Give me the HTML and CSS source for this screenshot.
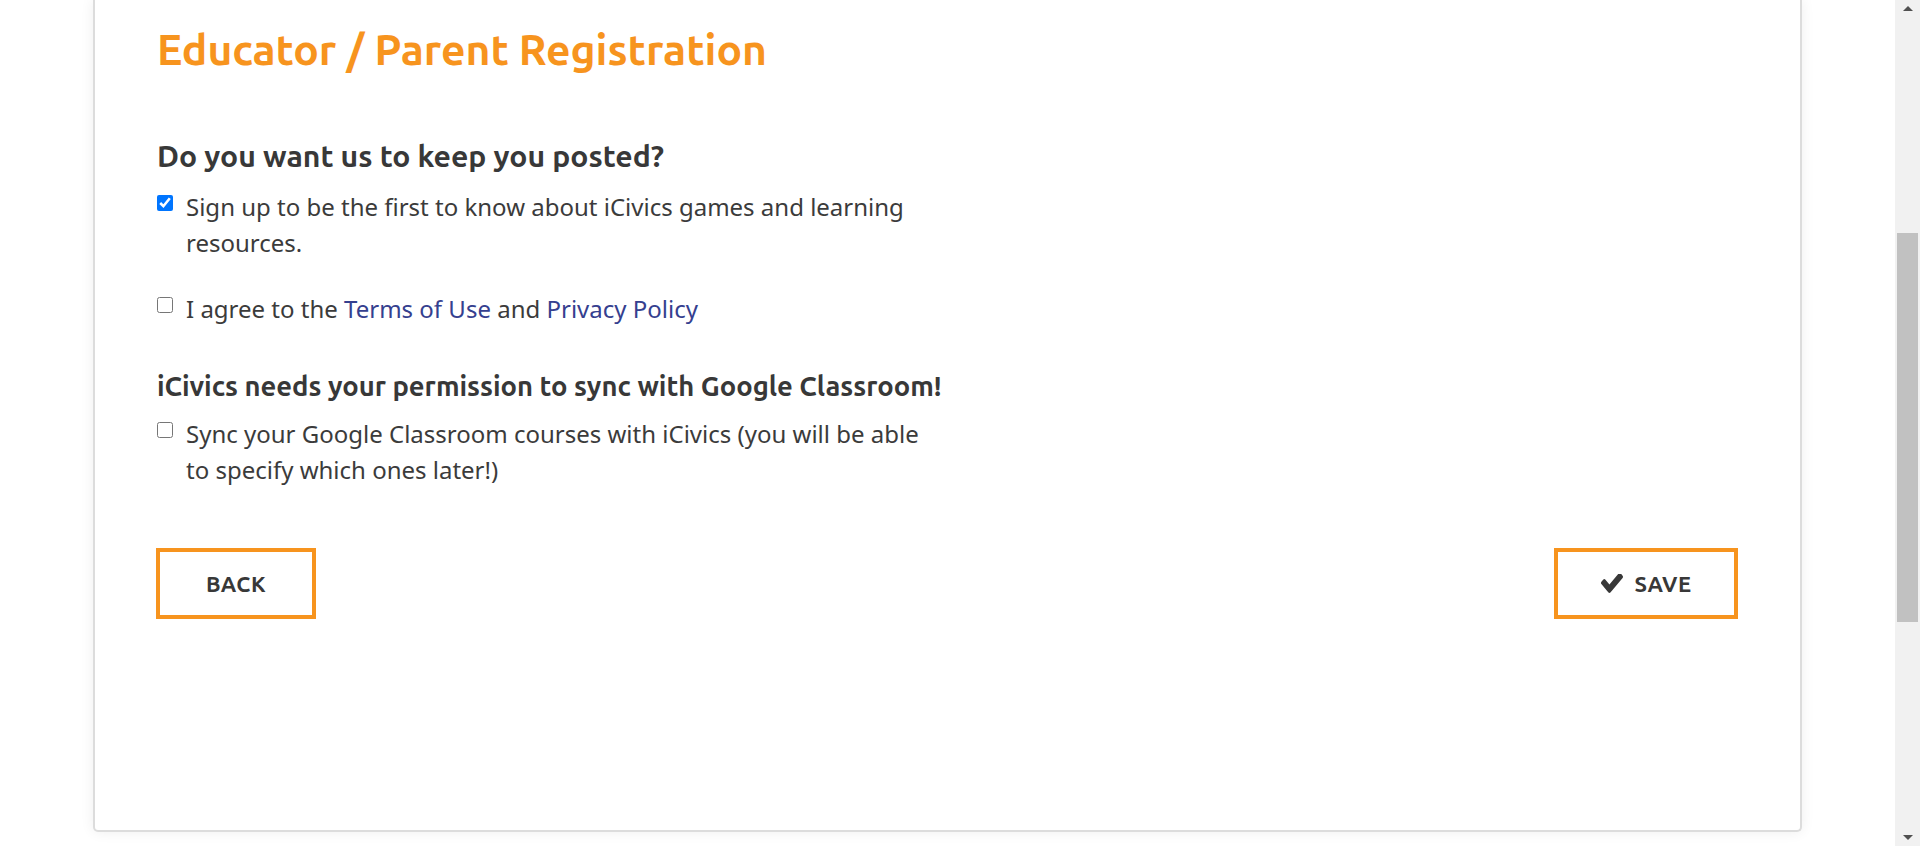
FILE: index.html
```html
<!DOCTYPE html>
<html lang="en">
<head>
<meta charset="utf-8">
<title>Educator / Parent Registration</title>
<link rel="stylesheet" href="styles.css">
</head>
<body>
<div class="page">
  <main class="main">
    <section class="card">
      <h1 class="title">Educator / Parent Registration</h1>

      <div class="form-col">
        <h2 class="sub">Do you want us to keep you posted?</h2>
        <label class="check-row">
          <input type="checkbox" class="cb" checked>
          <span class="check-text">Sign up to be the first to know about iCivics games and learning resources.</span>
        </label>
        <label class="check-row row-gap">
          <input type="checkbox" class="cb">
          <span class="check-text">I agree to the <a class="link" href="#">Terms of Use</a> and <a class="link" href="#">Privacy Policy</a></span>
        </label>

        <h3 class="sub2">iCivics needs your permission to sync with Google Classroom!</h3>
        <label class="check-row">
          <input type="checkbox" class="cb">
          <span class="check-text">Sync your Google Classroom courses with iCivics (you will be able to specify which ones later!)</span>
        </label>
      </div>

      <div class="actions">
        <button class="btn btn-back" type="button">BACK</button>
        <button class="btn btn-save" type="button">
          <svg class="check-icon" viewBox="121 402 1550 1122" preserveAspectRatio="none" aria-hidden="true"><path d="M1671 566q0 40-28 68l-724 724-136 136q-28 28-68 28t-68-28l-136-136-362-362q-28-28-28-68t28-68l136-136q28-28 68-28t68 28l294 295 656-657q28-28 68-28t68 28l136 136q28 28 28 68z"/></svg>
          SAVE
        </button>
      </div>
    </section>
  </main>
  <div class="scrollbar" aria-hidden="true">
    <span class="arrow arrow-up"></span>
    <div class="track"><div class="thumb"></div></div>
    <span class="arrow arrow-down"></span>
  </div>
</div>
</body>
</html>
```
FILE: styles.css
```css
* { box-sizing: border-box; }
html, body { margin: 0; padding: 0; }
body {
  background: #ffffff;
  font-family: "Noto Sans", "Open Sans", sans-serif;
  color: #3b3b3b;
  overflow: hidden;
}
.page {
  display: flex;
  height: 846px;
}
.main {
  flex: 1;
  overflow: hidden;
}
.card {
  margin: 0 93px;
  background: #fff;
  border: 2px solid #dcdcdc;
  border-top: none;
  border-radius: 0 0 5px 5px;
  box-shadow: 0 0 14px rgba(0, 0, 0, 0.07);
  padding: 24px 62px 211px 62px;
}
.title {
  margin: 0 0 63px;
  font-family: "Ubuntu", "Noto Sans", sans-serif;
  font-weight: 700;
  font-size: 42.6px;
  line-height: 51px;
  color: #f7941e;
}
.form-col {
  width: 820px;
}
.sub {
  margin: 0 0 15px;
  font-family: "Ubuntu", "Noto Sans", sans-serif;
  font-weight: 700;
  font-size: 30.2px;
  line-height: 36px;
  color: #383838;
}
.sub2 {
  margin: 42px 0 13px;
  font-family: "Ubuntu", "Noto Sans", sans-serif;
  font-weight: 700;
  font-size: 27.4px;
  line-height: 34px;
  color: #383838;
  white-space: nowrap;
}
.check-row {
  display: flex;
  align-items: flex-start;
  font-size: 24px;
  line-height: 36px;
  cursor: pointer;
}
.row-gap { margin-top: 30px; }
.cb {
  width: 16px;
  height: 16px;
  margin: 6px 13px 0 0;
  flex: none;
}
.check-text { max-width: 750px; }
.link {
  color: #35408f;
  text-decoration: none;
}
.actions {
  margin-top: 60px;
  display: flex;
  justify-content: space-between;
}
.btn {
  height: 71px;
  border: 4px solid #f7941e;
  background: #fff;
  display: flex;
  align-items: center;
  justify-content: center;
  font-family: "Ubuntu", "Noto Sans", sans-serif;
  font-weight: 700;
  font-size: 22px;
  letter-spacing: 0.5px;
  color: #383838;
  cursor: pointer;
}
.btn-back {
  width: 160px;
  padding: 0;
  margin-left: -1px;
}
.btn-save {
  width: 184px;
  padding: 0 0 0 1px;
}
.check-icon {
  width: 22px;
  height: 19px;
  fill: #383838;
  margin-right: 11px;
}
.scrollbar {
  width: 25px;
  flex: none;
  background: #f1f1f1;
  display: flex;
  flex-direction: column;
  align-items: center;
}
.arrow {
  width: 0;
  height: 0;
  border-left: 5px solid transparent;
  border-right: 5px solid transparent;
  flex: none;
}
.arrow-up {
  border-bottom: 5px solid #505050;
  margin: 6px 0 0;
}
.arrow-down {
  border-top: 5px solid #505050;
  margin: 0 0 6px;
}
.track {
  flex: 1;
  width: 100%;
  padding: 222px 2px 0;
}
.thumb {
  height: 389px;
  background: #c1c1c1;
}
```
